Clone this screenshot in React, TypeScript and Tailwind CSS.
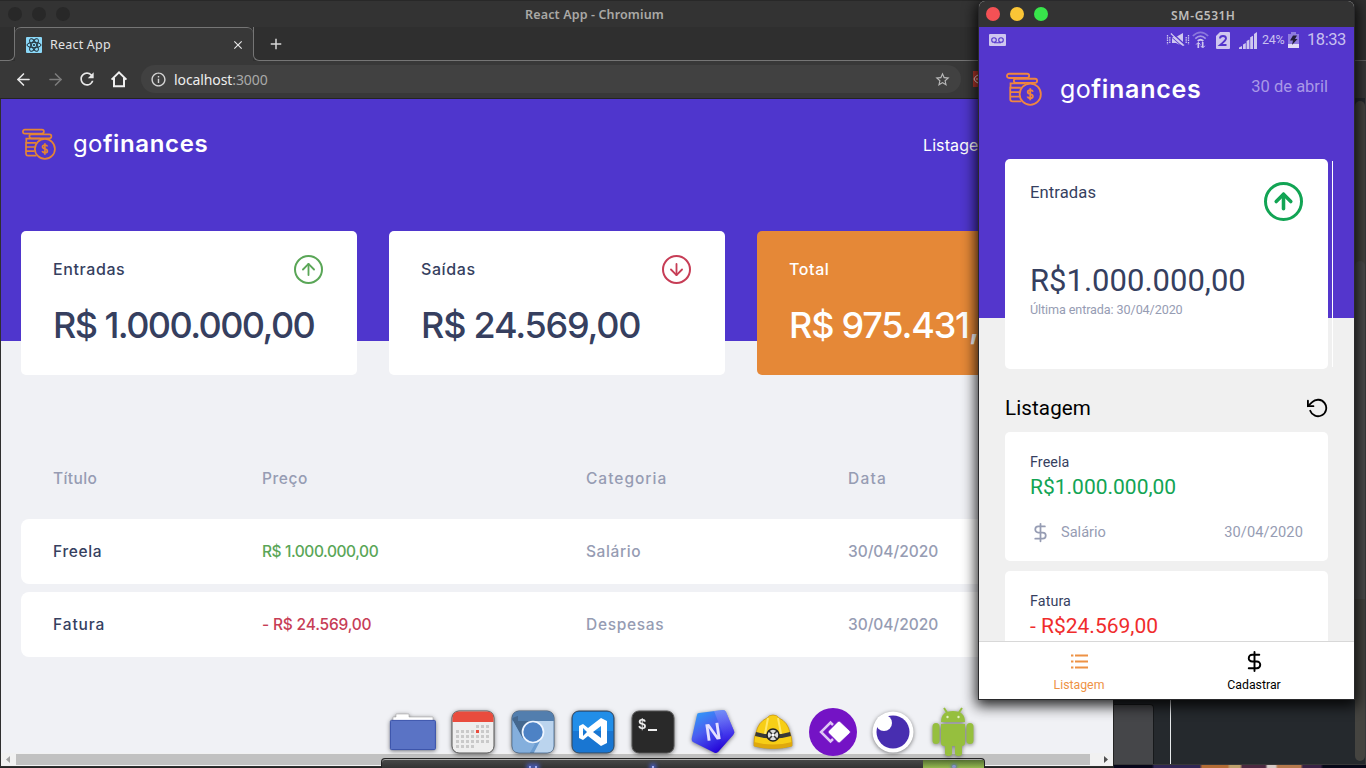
import type { ReactNode } from "react";
import { ArrowDown, ArrowLeft, ArrowRight, ArrowUp, DollarSign } from "lucide-react";
import { FiRotateCcw } from "react-icons/fi";
import { MdRefresh, MdInfoOutline, MdStarBorder, MdClose, MdAdd } from "react-icons/md";

function CoinsLogo({ className, color }: { className: string; color: string }) {
  return (
    <svg className={className} viewBox="0 0 34 32" fill="none" stroke={color} strokeWidth="1.7">
      <rect x="0.9" y="1.6" width="21" height="4" rx="2" />
      <rect x="7.4" y="6.3" width="22" height="4" rx="2" />
      <path d="M18 10.6H4.3v4.2H14M5 14.8h-1v4.2h8.5M4 19v4.2h8.5M4 23.2v2.6a2 2 0 0 0 2 1.8h8.5" />
      <circle cx="22.9" cy="20.9" r="10" />
      <path d="M25.5 18.6q-.5-1.6-2.6-1.6-2.4 0-2.4 1.8 0 1.5 2.4 2t2.5 2.1q0 1.900-2.500 1.900-2.200 0-2.700-1.700M22.900 15.300v11.400" />
    </svg>
  );
}

function ReactMark() {
  return (
    <svg className="size-4" viewBox="0 0 16 16" fill="none" stroke="#20303a" strokeWidth="1">
      <rect width="16" height="16" rx="1" fill="#8bd8f8" stroke="none" />
      <ellipse cx="8" cy="8" rx="7" ry="2.7" />
      <ellipse cx="8" cy="8" rx="7" ry="2.7" transform="rotate(60 8 8)" />
      <ellipse cx="8" cy="8" rx="7" ry="2.7" transform="rotate(120 8 8)" />
      <circle cx="8" cy="8" r="1.1" fill="#20303a" stroke="none" />
    </svg>
  );
}

function BrowserChrome() {
  return (
    <div className="h-[99px] shrink-0 border-b border-[#242424] bg-[#383838] font-['Noto_Sans']">
      <div className="flex h-[27px] items-center border-t border-[#282828] bg-[#333333] pl-2">
        <div className="flex gap-[10px]">
          <i className="size-[14px] rounded-full bg-[#282828]" />
          <i className="size-[14px] rounded-full bg-[#282828]" />
          <i className="size-[14px] rounded-full bg-[#282828]" />
        </div>
        <div className="flex-1 pt-[3px] text-center text-[12.5px] leading-none font-semibold tracking-[0.13px] text-[#aaa9a6]">
          <span className="relative left-[3px]">React App - Chromium</span>
        </div>
      </div>
      <div className="flex h-[34px] bg-[#2f2f2f]">
        <div className="w-[15px] shrink-0 rounded-br-md border-r border-b border-[#757575]" />
        <div className="flex w-[238px] shrink-0 items-center rounded-t-md border-t border-[#757575] bg-[#383838] pr-2 pl-[11px]">
          <ReactMark />
          <span className="ml-2 flex-1 pt-px text-[12.5px] tracking-[0.2px] text-[#e3e3e3]">React App</span>
          <MdClose className="size-[14px] text-[#e8e8e8]" />
        </div>
        <div className="flex flex-1 items-center rounded-bl-md border-b border-l border-[#757575] pl-[13px]">
          <MdAdd className="size-[18px] text-[#d8d8d8]" />
        </div>
      </div>
      <div className="flex h-[37px] items-center pb-px pl-[14px]">
        <ArrowLeft className="size-[19px] text-[#e8e8e8]" />
        <ArrowRight className="ml-[13px] size-[19px] text-[#7c7c7c]" />
        <MdRefresh className="ml-[12px] size-5 text-[#e8e8e8]" />
        <svg className="ml-[12px] size-5" viewBox="0 0 20 20" fill="none" stroke="#f0f0f0" strokeWidth="2">
          <path d="M2.600 10.600L10 3.300l7.400 7.300M5 9v8.200h10V9" />
        </svg>
        <div className="ml-3 flex h-7 w-[820px] items-center rounded-full bg-[#414141] pr-[10px] pl-[9px]">
          <MdInfoOutline className="size-[17px] text-[#d5d5d5]" />
          <span className="ml-[7px] flex-1 text-[14px] tracking-[-0.1px] text-[#eeeeee]">
            localhost<span className="text-[#a9a9a9]">:3000</span>
          </span>
          <MdStarBorder className="size-[17px] text-[#b9b9b9]" />
        </div>
        <div className="ml-3 h-4 w-4 bg-[#b4372c]">
          <svg className="h-4 w-4" viewBox="0 0 16 16" fill="none" stroke="#eee" strokeWidth="1"><path d="M5 4L2.500 5.500 1 8l1.500 2.500L5 12M4 7v2" /></svg>
        </div>
      </div>
    </div>
  );
}

function RoundArrow({ up }: { up: boolean }) {
  const Icon = up ? ArrowUp : ArrowDown;
  return (
    <span className={up ? "grid size-[29px] place-items-center rounded-full border-2 border-[#5aa657] text-[#5aa657]" : "grid size-[29px] place-items-center rounded-full border-2 border-[#c73d56] text-[#c73d56]"}>
      <Icon className="size-[19px]" strokeWidth={2.3} />
    </span>
  );
}

function Summary({ tone, label, icon, children }: { tone: string; label: string; icon?: ReactNode; children: ReactNode }) {
  return (
    <section className={`h-36 w-[336px] shrink-0 rounded-[5px] px-8 pt-[23px] ${tone}`}>
      <header className="flex h-[30px] items-center justify-between pr-[2px] text-[16px] font-medium tracking-[0.6px]">
        {label}
        {icon}
      </header>
      <p className="mt-[14px] text-[36px] leading-[54px] font-medium whitespace-nowrap">{children}</p>
    </section>
  );
}

function WebApp() {
  return (
    <main className="ml-px h-[654px] overflow-hidden bg-[#f0f1f5] font-['Inter']">
      <div className="h-[242px] bg-[#4f36cd] pt-[29px]">
        <div className="flex items-center pl-[21px]">
          <CoinsLogo className="h-8 w-[34px]" color="#e48534" />
          <span className="ml-[17px] w-[850px] text-[24px] leading-[32px] text-white">
            <span className="tracking-[0.4px]">go</span>
            <span className="font-semibold tracking-[0.65px]">finances</span>
          </span>
          <span className="pt-[2px] text-[16px] tracking-[0.1px] text-white">Listagem</span>
        </div>
      </div>
      <div className="-mt-[110px] flex gap-8 pl-5 text-[#363f5f]">
        <Summary tone="bg-white" label="Entradas" icon={<RoundArrow up />}>
          <span className="tracking-[-1.58px]">R$ 1.000.000,00</span>
        </Summary>
        <Summary tone="bg-white" label="Saídas" icon={<RoundArrow up={false} />}>
          <span className="tracking-[-1.2px]">R$ 24.569,00</span>
        </Summary>
        <Summary tone="bg-[#e58837] text-white" label="Total">
          <span className="tracking-[-1.2px]">R$ 975.431,00</span>
        </Summary>
      </div>
      <div className="mt-[71px] ml-5 w-[1120px] text-[15.5px] font-medium text-[#969cb3]">
        <div className="grid h-[65px] grid-cols-[209px_324px_262px_1fr] items-center pl-8">
          <span className="tracking-[0.4px]">Título</span>
          <span className="tracking-[0.6px]">Preço</span>
          <span className="tracking-[1px]">Categoria</span>
          <span className="tracking-[1.2px]">Data</span>
        </div>
        <div className="mt-2 grid h-[65px] grid-cols-[209px_324px_262px_1fr] items-center rounded-lg bg-white pl-8">
          <span className="tracking-[0.65px] text-[#363f5f]">Freela</span>
          <span className="tracking-[-0.43px] text-[#5aa657]">R$ 1.000.000,00</span>
          <span className="tracking-[0.6px]">Salário</span>
          <span className="tracking-[-0.03px]">30/04/2020</span>
        </div>
        <div className="mt-2 grid h-[65px] grid-cols-[209px_324px_262px_1fr] items-center rounded-lg bg-white pl-8">
          <span className="tracking-[0.9px] text-[#363f5f]">Fatura</span>
          <span className="tracking-[-0.18px] text-[#c73d56]">- R$ 24.569,00</span>
          <span className="tracking-[0.7px]">Despesas</span>
          <span className="tracking-[-0.03px]">30/04/2020</span>
        </div>
      </div>
    </main>
  );
}

function BrowserWindow() {
  return (
    <div className="flex h-full w-[1114px] shrink-0 flex-col border-r border-b border-[#242424] bg-[#2f2f2f]">
      <BrowserChrome />
      <WebApp />
      <div className="ml-px flex h-[13px] items-center bg-[#f1f1f1] pr-[5px] pl-[5px]">
        <svg className="h-[7px] w-1" viewBox="0 0 4 7"><path d="M4 0v7L0 3.5z" fill="#a3a3a3" /></svg>
        <div className="ml-[6px] h-[11px] w-[1074px] bg-[#c1c1c1]" />
        <div className="flex-1" />
        <svg className="h-[7px] w-1" viewBox="0 0 4 7"><path d="M0 0v7l4-3.5z" fill="#505050" /></svg>
      </div>
    </div>
  );
}

function BackgroundWindow() {
  return (
    <div className="flex flex-1 flex-col bg-[#25292d]">
      <div className="h-[61px] border-b border-[#606060] bg-[#303030]" />
      <div className="h-[37px] bg-[#383838]" />
      <div className="flex h-[667px] border-b border-[#383838]">
        <div className="mt-[606px] w-[40px] rounded-tr-sm border-t border-r border-[#17191b] bg-[#454649]" />
        <div className="w-4" />
        <div className="w-px bg-[#e8eaec]" />
        <div className="flex-1" />
        <div className="mt-[3px] mb-[3px] w-[10px] rounded-full bg-[#454440]">
          <div className="mt-40 h-[338px] rounded-t-md bg-[#4c4c4c]" />
        </div>
        <div className="w-px bg-[#38393b]" />
      </div>
      <div className="h-[3px] bg-[linear-gradient(90deg,#07061a_0_15%,#302653_16%_34%,#b36c35_35%_45%,#bfa16c_46%_50%,#4c2941_51%_60%,#d6cac7_61%_64%,#b77a4d_65%_74%,#392244_75%_82%,#070818_83%)]" />
    </div>
  );
}

function StatusBar() {
  return (
    <div className="flex h-[26px] items-center pr-[8px] pl-[10px] text-[#c9c1ef]">
      <svg className="h-[13px] w-[17px]" viewBox="0 0 17 13">
        <rect width="17" height="12" rx="1" fill="#cfc7ef" />
        <g fill="none" stroke="#5436cc" strokeWidth="1.1"><circle cx="5" cy="6" r="2.300" /><circle cx="12" cy="6" r="2.300" /><path d="M5 8.700h7" /></g>
      </svg>
      <div className="flex-1" />
      <svg className="h-[16px] w-[24px]" viewBox="0 0 24 16" fill="#cfc7ef">
        <path d="M6 5h4l7-4v13l-3-2-8-7z" />
        <path d="M6 6v5h4l4 2z" />
        <path d="M5 1.500l13 12" stroke="#cfc7ef" strokeWidth="1.600" /><path d="M6.500 1.300l12 11" stroke="#5436cc" strokeWidth="1.200" />
        <path d="M1.500 3v9.500M3.800 5v6M22.500 3v9.500M20.200 5v6" fill="none" stroke="#cfc7ef" strokeWidth="1.300" strokeDasharray="1.500 .8" />
      </svg>
      <svg className="ml-[2px] h-[18px] w-[17px]" viewBox="0 0 17 18" fill="none" stroke="#cfc7ef" strokeWidth="1.7">
        <path d="M.8 5Q8.5-2.2 16.2 5" opacity=".45" /><path d="M3.3 7.6Q8.5 2.7 13.7 7.6" opacity=".65" /><path d="M5.7 10Q8.5 7.5 11.3 10" />
        <path d="M6.3 17v-5M10.7 11v5" /><path d="M4.2 13.5l2.1-2.2 2.1 2.2M8.6 14.8l2.1 2.2 2.1-2.2" strokeWidth="1" />
      </svg>
      <svg className="ml-[7px] h-[17px] w-[14px]" viewBox="0 0 14 17">
        <path d="M4 0h9a1 1 0 0 1 1 1v15a1 1 0 0 1-1 1H1a1 1 0 0 1-1-1V4z" fill="#cfc7ef" />
        <path d="M4 6.5Q4 4 7 4t3 2.5Q10 8.200 4.200 13H10.500" fill="none" stroke="#5436cc" strokeWidth="1.9" />
      </svg>
      <svg className="ml-[9px] h-[17px] w-[18px]" viewBox="0 0 18 17" fill="#cfc7ef">
        <path d="M0 17v-1.500l3-1.500v3zM4 17v-4.500l2.800-1.500v6zM7.600 17V9l2.800-1.500V17zM11.200 17V5.300l2.800-1.600V17zM15 17V2l3-2v17z" />
      </svg>
      <span className="ml-[5px] w-[24px] text-[12.5px] tracking-[-0.2px]">24%</span>
      <svg className="ml-[2px] h-[16px] w-[11px]" viewBox="0 0 11 16">
        <path d="M3 0h5v2h3v14H0V2h3z" fill="#8e7bdf" /><path d="M0 12h11v4H0z" fill="#e2dcf7" /><path d="M5 3.5h4L7 7h2.5L4 13l1-4.5H2z" fill="#231d3a" />
      </svg>
      <span className="ml-[8px] pt-px text-[16.5px] tracking-[-0.4px] whitespace-nowrap">18:33</span>
    </div>
  );
}

function PhoneListCard({ title, value, tone, children }: { title: string; value: string; tone: string; children?: ReactNode }) {
  return (
    <article className="mb-[10px] h-[129px] w-[323px] rounded-[5px] bg-white px-[25px] pt-[21px]">
      <h3 className="text-[14.3px] leading-[18px] tracking-[0.1px] text-[#363f5f]">{title}</h3>
      <p className={`mt-[3px] text-[21px] leading-[26px] ${tone}`}>{value}</p>
      {children}
    </article>
  );
}

function PhoneWindow() {
  return (
    <div className="absolute top-px left-[979px] flex h-[698px] w-[375px] flex-col overflow-hidden rounded-t-md bg-[#f0f0f0] font-['Roboto'] shadow-[0_0_0_1px_#29292b,0_4px_14px_3px_rgba(0,0,0,0.85)]">
      <div className="flex h-[26px] shrink-0 items-center bg-[#333333] pl-[7px] font-['Noto_Sans']">
        <div className="flex gap-[10px]">
          <i className="size-[14px] rounded-full bg-[#f45155]" />
          <i className="size-[14px] rounded-full bg-[#fac536]" />
          <i className="size-[14px] rounded-full bg-[#38e54b]" />
        </div>
        <span className="ml-[123px] pt-[3px] text-[12px] leading-none font-semibold tracking-[0.7px] text-[#bebdba]"><span className="tracking-[0.72px]">SM-</span><span className="tracking-[0.4px]">G531H</span></span>
      </div>
      <div className="h-[291px] shrink-0 bg-[#5436cc]">
        <StatusBar />
        <div className="mt-[19px] flex items-center pr-[26px] pl-[27px]">
          <CoinsLogo className="h-[34px] w-[36px]" color="#f0863f" />
          <span className="ml-[18px] flex-1 pb-px font-['Inter'] text-[25px] leading-[32px] text-white">
            <span className="tracking-[0.4px]">go</span>
            <span className="font-semibold tracking-[0.75px]">finances</span>
          </span>
          <span className="relative -top-[2px] text-[16.5px] text-[#a998e7]">30 de abril</span>
        </div>
      </div>
      <div className="-mt-[159px] flex shrink-0 items-center gap-[4px] pl-[26px]">
        <section className="h-[210px] w-[323px] rounded-[5px] bg-white px-[25px] pt-[23px] text-[#363f5f]">
          <div className="flex h-[39px] justify-between">
            <span className="pt-px text-[16.6px] leading-5 tracking-[0.1px]">Entradas</span>
            <span className="grid size-[39px] place-items-center rounded-full border-[3.5px] border-[#12a454]">
              <ArrowUp className="size-[25px] text-[#12a454]" strokeWidth={3.4} />
            </span>
          </div>
          <p className="mt-[41px] text-[31px] leading-[38px]">R$1.000.000,00</p>
          <p className="mt-[2px] text-[12.6px] leading-4 tracking-[-0.1px] text-[#969cb3]">Última entrada: 30/04/2020</p>
        </section>
        <div className="h-[206px] w-px bg-white" />
      </div>
      <div className="min-h-0 flex-1 overflow-hidden pr-[25px] pl-[26px]">
        <div className="flex h-[63px] items-center justify-between pt-[15px] text-[20.6px] text-black">
          <span className="tracking-[0.1px]">Listagem</span>
          <FiRotateCcw className="size-[22px]" />
        </div>
        <PhoneListCard title="Freela" value="R$1.000.000,00" tone="text-[#12a454]">
          <div className="mt-[21px] flex items-center text-[14.6px] text-[#969cb3]">
            <DollarSign className="size-[21px]" />
            <span className="ml-[10px] flex-1 pt-px">Salário</span>
            <span className="pt-px tracking-[0.12px]">30/04/2020</span>
          </div>
        </PhoneListCard>
        <PhoneListCard title="Fatura" value="- R$24.569,00" tone="text-[#f02c2c]" />
      </div>
      <nav className="grid h-[58px] shrink-0 grid-cols-[200px_150px] border-t border-[#d8d8d8] bg-white text-[12.3px]">
        <div className="flex flex-col items-center pt-[9px] text-[#ee9245]">
          <svg className="h-[22px] w-[17px]" viewBox="0 0 17 22" stroke="currentColor" strokeWidth="2">
            <path d="M0 4.500h2.400M4 4.500h13M0 10.500h2.400M4 10.500h13M0 16.500h2.400M4 16.500h13" />
          </svg>
          <span className="mt-[3px]">Listagem</span>
        </div>
        <div className="flex flex-col items-center pt-[8px] text-black">
          <DollarSign className="size-[23px]" />
          <span className="mt-[3px]">Cadastrar</span>
        </div>
      </nav>
    </div>
  );
}

function Dock() {
  const svg = "size-[52px] drop-shadow-[0_1px_2px_rgba(0,0,0,0.5)]";
  const plate = { x: 5, y: 5, width: 42, height: 42, rx: 7 };
  return (
    <div className="absolute top-[706px] left-[381px] h-[62px] w-[604px]">
      <div className="mt-[52px] flex h-[10px] items-end overflow-hidden rounded-t-[4px] border border-b-0 border-[#222] bg-gradient-to-b from-[#4a4a4a] to-[#333] shadow-[inset_0_1px_0_#aaa]">
        <i className="ml-[147px] h-[2px] w-[2px] bg-[#a5b2f5] shadow-[0_0_4px_2px_#4c63d2]" />
        <i className="ml-[4px] h-[2px] w-[2px] bg-[#a5b2f5] shadow-[0_0_4px_2px_#4c63d2]" />
        <i className="ml-[115px] h-[2px] w-[2px] bg-[#a5b2f5] shadow-[0_0_4px_2px_#4c63d2]" />
        <div className="ml-auto flex h-2 w-[61px] items-end justify-center bg-gradient-to-b from-[#557032] to-[#95b94f]">
          <i className="h-[3px] w-1 rounded-full bg-[#8995ca] shadow-[0_0_3px_1px_#5873a5]" />
        </div>
      </div>
      <div className="absolute top-0 left-[2px] flex [&>span]:grid [&>span]:w-[60px] [&>span]:place-items-center">
        <span><svg className={svg} viewBox="0 0 52 52"><path d="M6 14V11h3V8h13v3h24v7H6z" fill="#fff" stroke="#aaa" strokeWidth=".6" /><rect x="3.4" y="14.4" width="45" height="29.2" rx="1" fill="#5a73c5" stroke="#3750aa" /></svg></span>
        <span><svg className={svg} viewBox="0 0 52 52"><rect {...plate} fill="#eee" stroke="#555" /><path d="M5.5 16v-4Q5.5 5.5 12 5.5h28q6.500 0 6.500 6.500v4z" fill="#e94c3d" /><g fill="#c9c9c9">{[0, 1, 2, 3, 4].flatMap((r) => [0, 1, 2, 3, 4, 5, 6].filter((c) => (r > 0 || c > 3) && (r < 4 || c < 4)).map((c) => <rect key={`${r}-${c}`} x={9 + c * 5} y={19 + r * 5} width="3" height="3" fill={r === 1 && c === 4 ? "#e94c3d" : undefined} />))}</g></svg></span>
        <span><svg className={svg} viewBox="0 0 52 52"><rect {...plate} fill="#6a9bd0" stroke="#475e78" /><path d="M5.500 15v-3q0-6.500 6.500-6.500h28q6.500 0 6.500 6.500v3z" fill="#527eae" /><path d="M5.500 12v2l10 18 9-17-14-5z" fill="#44688f" /><path d="M11 15V6h29q6 0 6.500 6v3z" fill="#527eae" /><path d="M26 15h20.500v25q0 6-6 6.500H27l9-17z" fill="#bbd4ee" /><path d="M5.500 14L16 33l12 5-5 8.500H12q-6.500 0-6.500-6.500z" fill="#84afdd" /><circle cx="26" cy="26" r="10.500" fill="#4d82c5" stroke="#eef5ff" strokeWidth="1.700" /></svg></span>
        <span><svg className={svg} viewBox="0 0 52 52"><rect {...plate} fill="#1976d2" stroke="#354758" /><path d="M6 11q1-5 6-5h28q5 0 6 5v14H6z" fill="#218ee8" /><path fillRule="evenodd" d="M34 12l6 3v22l-6 3-13-10-5 4-4-2V20l4-2 5 4zm0 8l-8 6 8 6zM16 22v8l4-4z" fill="#fff" /></svg></span>
        <span><svg className={svg} viewBox="0 0 52 52"><rect {...plate} fill="#292929" stroke="#555" /><text x="11" y="23" fontFamily="Liberation Mono" fontSize="14" fontWeight="bold" fill="#eee">$</text><path d="M21 24h9" stroke="#eee" strokeWidth="2" /></svg></span>
        <span><svg className={svg} viewBox="0 0 52 52"><defs><linearGradient id="nucleo" x1="0" y1="0" x2=".6" y2="1"><stop stopColor="#2ba8fa" /><stop offset=".5" stopColor="#4b5cf0" /><stop offset="1" stopColor="#2300d8" /></linearGradient><linearGradient id="facet" x1="0" y1="0" x2="0" y2="1"><stop stopColor="#929cfa" /><stop offset=".6" stopColor="#4638ef" /><stop offset="1" stopColor="#2000c8" /></linearGradient></defs><path d="M12 7l24-3q2 0 3 2l8 19q1 2-1 4L31 46q-2 2-5 0L6 36q-2-1-1-5L10 9q0-2 2-2z" fill="url(#nucleo)" /><path d="M27 5l9-1q2 0 3 2l8 19q1 2-1 4L31 46l5-18z" fill="url(#facet)" opacity=".6" /><text x="18" y="34" fontFamily="Liberation Sans" fontSize="24" fontWeight="bold" fill="#e5e0ff" transform="rotate(-8 26 26)" textLength="16" lengthAdjust="spacingAndGlyphs">N</text></svg></span>
        <span><svg className={svg} viewBox="0 0 52 52"><path d="M7 37Q7 30 9 27q2-11 11-15 2-3 6-3t6 3q9 4 11 15 2 4 2 10v3q-19 5-38 0z" fill="#f7ce16" stroke="#c99205" strokeWidth=".7" /><path d="M7 36q19 5 38 0v4q-19 5-38 0z" fill="#dfa80d" /><path d="M21 12l-3 16M31 12l3 16" stroke="#ffe86a" strokeWidth="2" /><path d="M9 26q17 5 34 0l1 4q-18 5-36 0z" fill="#383838" /><circle cx="26" cy="29" r="6" fill="#ddd" stroke="#222" strokeWidth="1.500" /><path d="M22 25l8 8M30 25l-8 8" stroke="#333" strokeWidth="1.500" /><circle cx="26" cy="29" r="1.500" fill="#fff" /></svg></span>
        <span><svg className="size-[52px]" viewBox="0 0 52 52"><circle cx="26" cy="26" r="24" fill="#7413c5" /><path d="M26 19l-2.500-2.500L14 26l9.500 9.500L26 33" fill="none" stroke="#dec6f4" strokeWidth="2.500" /><path d="M31 15.500q1-1 2 0L43 25q1 1 0 2l-10 9.500q-1 1-2 0L21.500 27q-1-1 0-2z" fill="#fff" stroke="#7413c5" strokeWidth=".8" /></svg></span>
        <span><svg className={svg} viewBox="0 0 52 52"><circle cx="26" cy="26" r="20.500" fill="#fff" /><circle cx="26" cy="26" r="16.500" fill="#482eb0" /><circle cx="17" cy="17" r="8" fill="#fff" /></svg></span>
        <span><svg className={svg} viewBox="0 0 52 52" fill="#96bf3e"><path d="M14 16Q14 5 26 5t12 11z" /><path d="M17 2l4 6M35 2l-4 6" stroke="#96bf3e" strokeWidth="2" /><path d="M14 18h24v19q0 3-3 3H17q-3 0-3-3z" /><rect x="5.500" y="17" width="7" height="21" rx="3.500" /><rect x="39.500" y="17" width="7" height="21" rx="3.500" /><rect x="18" y="34" width="7" height="16" rx="3" /><rect x="28" y="34" width="7" height="16" rx="3" /><circle cx="20.500" cy="11" r="1.200" fill="#e5f1c6" /><circle cx="31.500" cy="11" r="1.200" fill="#e5f1c6" /></svg></span>
      </div>
    </div>
  );
}

export default function App() {
  return (
    <div className="relative flex h-[768px] w-[1366px] overflow-hidden bg-[#25292d]">
      <BrowserWindow />
      <BackgroundWindow />
      <Dock />
      <PhoneWindow />
    </div>
  );
}
